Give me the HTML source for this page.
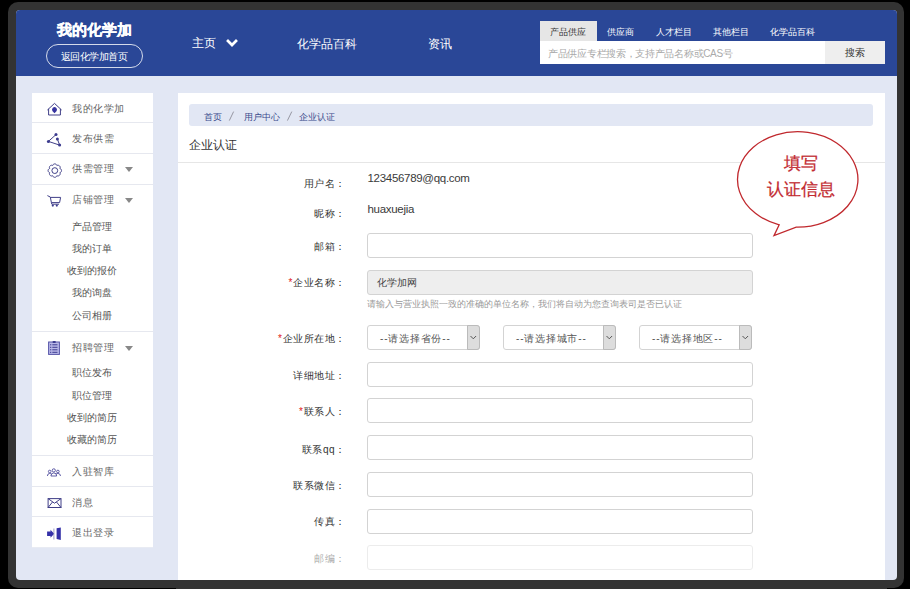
<!DOCTYPE html>
<html><head><meta charset="utf-8">
<style>
*{margin:0;padding:0;box-sizing:border-box}
html,body{width:910px;height:589px;overflow:hidden;background:#000;font-family:"Liberation Sans",sans-serif}
.a{position:absolute;white-space:nowrap}
#frame{position:absolute;left:8px;top:2px;width:896px;height:586px;background:#333;border-radius:10px}
#fb{position:absolute;left:176px;top:570px;width:711px;height:19px;background:#333}
#screen{position:absolute;left:16px;top:10px;width:881px;height:570px;background:#e2e7f4;border-radius:4px;overflow:hidden}
#hdr{position:absolute;left:0;top:0;width:881px;height:66px;background:#2a4797}
.w{color:#fff}
#side{position:absolute;left:16px;top:83px;width:121px;height:455px;background:#fff}
.sep{position:absolute;left:0;width:121px;height:1px;background:#e6e8ef}
.it{position:absolute;left:40px;font-size:10px;letter-spacing:0.6px;color:#666;line-height:14px;white-space:nowrap}
.sub{position:absolute;left:-1px;width:121px;text-align:center;font-size:10px;color:#555;line-height:14px;white-space:nowrap}
.tri{position:absolute;left:93px;width:0;height:0;border-left:4.5px solid transparent;border-right:4.5px solid transparent;border-top:5px solid #888}
#mainbg{position:absolute;left:162px;top:83px;width:707px;height:500px;background:#fff}
#main{position:absolute;left:162px;top:82px;width:707px;height:500px}
.lab{position:absolute;right:539.5px;letter-spacing:0.5px;font-size:10px;color:#333;line-height:14px;text-align:right;white-space:nowrap}
.inp{position:absolute;left:189px;width:386px;height:25px;border:1px solid #d3d3d3;border-radius:3px;background:#fff}
.sel{position:absolute;width:113px;height:25px;border:1px solid #d3d3d3;border-radius:3px;background:#fff}
.sel i{position:absolute;right:-1px;top:-1px;width:13px;height:25px;background:#ddd;border:1px solid #bbb;border-radius:0 3px 3px 0}
.sel span{position:absolute;left:12px;top:6px;font-size:10px;letter-spacing:0.8px;line-height:14px;color:#555;white-space:nowrap}
.req{color:#e02020}
svg.ov{position:absolute;left:0;top:0}
</style></head><body>
<div id="frame"></div><div id="fb"></div>
<div id="screen">
  <div id="hdr">
    <div class="a w" style="left:41px;top:10px;font-size:15px;font-weight:bold;line-height:20px;-webkit-text-stroke:0.35px #fff">我的化学加</div>
    <div class="a" style="left:30px;top:34px;width:97px;height:24px;border:1px solid rgba(255,255,255,.8);border-radius:12px"></div>
    <div class="a w" style="left:44.5px;top:40px;font-size:10px;line-height:13px;letter-spacing:-0.45px">返回化学加首页</div>
    <div class="a w" style="left:176px;top:25.2px;font-size:12px;line-height:16px">主页</div>
    <div class="a w" style="left:281px;top:26px;font-size:12px;line-height:16px">化学品百科</div>
    <div class="a w" style="left:412px;top:26px;font-size:12px;line-height:16px">资讯</div>
    <!-- tabs -->
    <div class="a" style="left:524px;top:11px;width:57px;height:20px;background:#e6e6e6"></div>
    <div class="a" style="left:534px;top:15.5px;font-size:9px;line-height:13px;color:#333">产品供应</div>
    <div class="a w" style="left:591px;top:15.5px;font-size:9px;line-height:13px">供应商</div>
    <div class="a w" style="left:640px;top:15.5px;font-size:9px;line-height:13px">人才栏目</div>
    <div class="a w" style="left:696.5px;top:15.5px;font-size:9px;line-height:13px">其他栏目</div>
    <div class="a w" style="left:753.5px;top:15.5px;font-size:9px;line-height:13px">化学品百科</div>
    <div class="a" style="left:524px;top:31px;width:285px;height:23px;background:#fff"></div>
    <div class="a" style="left:532px;top:36.5px;font-size:10px;line-height:13px;color:#aaa;letter-spacing:-0.3px">产品供应专栏搜索，支持产品名称或CAS号</div>
    <div class="a" style="left:809px;top:31px;width:60px;height:23px;background:#eee"></div>
    <div class="a" style="left:829px;top:36px;font-size:10px;line-height:13px;color:#333">搜索</div>
  </div>

  <div id="side">
    <div class="it" style="top:9px">我的化学加</div>
    <div class="sep" style="top:29px"></div>
    <div class="it" style="top:39px">发布供需</div>
    <div class="sep" style="top:60px"></div>
    <div class="it" style="top:69px">供需管理</div><div class="tri" style="top:74px"></div>
    <div class="sep" style="top:91px"></div>
    <div class="it" style="top:100px">店铺管理</div><div class="tri" style="top:105px"></div>
    <div class="sub" style="top:127px">产品管理</div>
    <div class="sub" style="top:149px">我的订单</div>
    <div class="sub" style="top:171px">收到的报价</div>
    <div class="sub" style="top:193px">我的询盘</div>
    <div class="sub" style="top:216px">公司相册</div>
    <div class="sep" style="top:238px"></div>
    <div class="it" style="top:248px">招聘管理</div><div class="tri" style="top:253px"></div>
    <div class="sub" style="top:273px">职位发布</div>
    <div class="sub" style="top:296px">职位管理</div>
    <div class="sub" style="top:318px">收到的简历</div>
    <div class="sub" style="top:340px">收藏的简历</div>
    <div class="sep" style="top:362px"></div>
    <div class="it" style="top:372px">入驻智库</div>
    <div class="sep" style="top:393px"></div>
    <div class="it" style="top:403px">消息</div>
    <div class="sep" style="top:423px"></div>
    <div class="it" style="top:433px">退出登录</div>
    <div class="sep" style="top:454px;background:#e8ebf3"></div>
  </div>

  <div id="mainbg"></div>
  <div id="main">
    <div class="a" style="left:11px;top:12px;width:684px;height:22px;background:#e2e7f4;border-radius:3px"></div>
    <div class="a" style="left:25.5px;top:18.5px;font-size:9px;line-height:13px;color:#3a4b8c">首页</div>
    <div class="a" style="left:65.5px;top:18.5px;font-size:9px;line-height:13px;color:#3a4b8c">用户中心</div>
    <div class="a" style="left:120.5px;top:18.5px;font-size:9px;line-height:13px;color:#3a4b8c">企业认证</div>
    <div class="a" style="left:10.5px;top:45px;font-size:12px;line-height:16px;color:#333">企业认证</div>
    <div class="a" style="left:0;top:70px;width:707px;height:1px;background:#e6e6e6"></div>

    <div class="lab" style="top:85px">用户名：</div>
    <div class="a" style="left:189.5px;top:79px;font-size:11.5px;letter-spacing:-0.3px;line-height:15px;color:#3a3a3a">123456789@qq.com</div>
    <div class="lab" style="top:115px">昵称：</div>
    <div class="a" style="left:189.5px;top:110px;font-size:11.5px;letter-spacing:-0.3px;line-height:15px;color:#3a3a3a">huaxuejia</div>
    <div class="lab" style="top:148px">邮箱：</div>
    <div class="inp" style="top:141px"></div>
    <div class="lab" style="top:184px"><span class="req">*</span>企业名称：</div>
    <div class="inp" style="top:178px;background:#eee"></div>
    <div class="a" style="left:199px;top:184px;font-size:10px;line-height:14px;color:#444">化学加网</div>
    <div class="a" style="left:189px;top:206px;font-size:8.6px;line-height:12px;color:#999">请输入与营业执照一致的准确的单位名称，我们将自动为您查询表司是否已认证</div>

    <div class="lab" style="top:240px"><span class="req">*</span>企业所在地：</div>
    <div class="sel" style="left:189px;top:233px"><span>--请选择省份--</span><i></i></div>
    <div class="sel" style="left:325px;top:233px"><span>--请选择城市--</span><i></i></div>
    <div class="sel" style="left:461px;top:233px"><span>--请选择地区--</span><i></i></div>

    <div class="lab" style="top:277px">详细地址：</div>
    <div class="inp" style="top:270px"></div>
    <div class="lab" style="top:313px"><span class="req">*</span>联系人：</div>
    <div class="inp" style="top:306px"></div>
    <div class="lab" style="top:351px">联系qq：</div>
    <div class="inp" style="top:343px"></div>
    <div class="lab" style="top:387px">联系微信：</div>
    <div class="inp" style="top:380px"></div>
    <div class="lab" style="top:423px">传真：</div>
    <div class="inp" style="top:417px"></div>
    <div style="opacity:.42">
    <div class="lab" style="top:460px">邮编：</div>
    <div class="inp" style="top:453px"></div>
    </div>
  </div>
</div>
<svg class="ov" width="910" height="589" viewBox="0 0 910 589">
  <!-- header chevron -->
  <path d="M228 41 L232 45 L236 41" stroke="#fff" stroke-width="2.7" fill="none" stroke-linecap="square"/>
  <g stroke="#403f88" fill="none" stroke-width="1">
    <!-- home -->
    <path d="M47.4 110 L54.5 103.4 L61.6 110 M48.6 108.9 V115 H60.4 V108.9"/>
    <!-- share -->
    <path d="M56 134.6 L48.4 141.4 L59.6 145.1 L57.4 139"/>
    <!-- gear -->
    <circle cx="54.8" cy="170.6" r="2.9"/>
    <path d="M61.5 170.6 L61.5 171.0 L61.3 171.5 L61.1 171.9 L60.8 172.2 L60.4 172.5 L59.9 172.7 L60.1 173.2 L60.2 173.7 L60.1 174.2 L60.0 174.6 L59.8 175.0 L59.5 175.3 L59.2 175.6 L58.8 175.8 L58.4 175.9 L57.9 176.0 L57.4 175.9 L56.9 175.7 L56.7 176.2 L56.4 176.6 L56.1 176.9 L55.7 177.1 L55.2 177.3 L54.8 177.3 L54.4 177.3 L53.9 177.1 L53.5 176.9 L53.2 176.6 L52.9 176.2 L52.7 175.7 L52.2 175.9 L51.7 176.0 L51.2 175.9 L50.8 175.8 L50.4 175.6 L50.1 175.3 L49.8 175.0 L49.6 174.6 L49.5 174.2 L49.4 173.7 L49.5 173.2 L49.7 172.7 L49.2 172.5 L48.8 172.2 L48.5 171.9 L48.3 171.5 L48.1 171.0 L48.1 170.6 L48.1 170.2 L48.3 169.7 L48.5 169.3 L48.8 169.0 L49.2 168.7 L49.7 168.5 L49.5 168.0 L49.4 167.5 L49.5 167.0 L49.6 166.6 L49.8 166.2 L50.1 165.9 L50.4 165.6 L50.8 165.4 L51.2 165.3 L51.7 165.2 L52.2 165.3 L52.7 165.5 L52.9 165.0 L53.2 164.6 L53.5 164.3 L53.9 164.1 L54.4 163.9 L54.8 163.9 L55.2 163.9 L55.7 164.1 L56.1 164.3 L56.4 164.6 L56.7 165.0 L56.9 165.5 L57.4 165.3 L57.9 165.2 L58.4 165.3 L58.8 165.4 L59.2 165.6 L59.5 165.9 L59.8 166.2 L60.0 166.6 L60.1 167.0 L60.2 167.5 L60.1 168.0 L59.9 168.5 L60.4 168.7 L60.8 169.0 L61.1 169.3 L61.3 169.7 L61.5 170.2Z"/>
    <!-- cart -->
    <path d="M47.4 195.6 L50.3 197 L51.4 202.6 H59.6 L60.6 197.4 H50.6 M51.4 202.6 L51.8 204.2 H59"/>
    <!-- mail -->
    <rect x="48.1" y="498.6" width="12.9" height="8.9"/>
    <path d="M48.1 498.6 L54.5 503.2 L61 498.6 M48.1 507.5 L52.5 502 M61 507.5 L56.5 502"/>
    <!-- people -->
    <g stroke="#4e4c9c" stroke-width="0.9">
    <circle cx="53.8" cy="470.4" r="1.6"/>
    <circle cx="49.7" cy="471.5" r="1.3"/>
    <circle cx="57.9" cy="471.5" r="1.3"/>
    <path d="M50.9 476 Q51 472.9 53.8 472.9 Q56.6 472.9 56.7 476 Z M47.4 476 Q47.5 473.5 49.7 473.4 Q50.9 473.4 51.6 474.2 M60.5 476 Q60.4 473.5 57.9 473.4 Q56.7 473.4 56 474.2"/>
    </g>
  </g>
  <g fill="#3c3b8f">
    <path d="M54.5 113.2 L52.4 110.9 A2.45 2.45 0 1 1 56.6 110.9 Z" fill="#3733a0"/>
    <circle cx="56" cy="134.6" r="1.5"/><circle cx="48.4" cy="141.4" r="1.5"/><circle cx="57.4" cy="139" r="1.5"/><circle cx="59.6" cy="145.1" r="1.5"/>
    <circle cx="52.8" cy="205.6" r="1.1"/><circle cx="56.8" cy="205.6" r="1.1"/>
  </g>
  <!-- clipboard -->
  <rect x="48.6" y="342" width="10.8" height="12.4" fill="#b9b8e8" stroke="#5654a8" stroke-width="1"/>
  <rect x="52.5" y="341" width="3.4" height="2" rx="1" fill="#3c3b8f"/>
  <g stroke="#3c3b8f" stroke-width="1">
    <path d="M50 344.8 H51.3 M52.3 344.8 H57.5 M50 347.3 H51.3 M52.3 347.3 H57.5 M50 349.8 H51.3 M52.3 349.8 H57.5 M50 352.3 H51.3 M52.3 352.3 H57.5"/>
  </g>
  <!-- exit -->
  <path d="M47.1 531.6 H50.5 V529.8 L54.2 533.8 L50.5 537.8 V536 H47.1 Z" fill="#3430a8"/>
  <path d="M53.9 528.5 V539.5" stroke="#8886bb" stroke-width="0.8"/>
  <path d="M56.6 528.3 L60.8 527.4 V540 L56.6 539 Z" fill="#3430a8"/>
  <path d="M470.5 336 L473.3 338.8 L476.1 336 M606.5 336 L609.3 338.8 L612.1 336 M742.5 336 L745.3 338.8 L748.1 336" stroke="#555" stroke-width="1" fill="none"/>
  <path d="M229.3 120.6 L233.6 111.6 M287.4 120.6 L291.8 111.6" stroke="#8d8d99" stroke-width="0.9" fill="none"/>
  <!-- speech bubble -->
  <path d="M779.2 224.8 L774 235.6 L796.2 227.1 A60.2 47.7 0 1 0 779.2 224.8 Z" fill="#fff" stroke="#c0282d" stroke-width="1.3" stroke-linejoin="miter"/>
  <text x="801" y="169" font-size="17" fill="#c22a30" stroke="#c22a30" stroke-width="0.25" text-anchor="middle" font-family="Liberation Sans, sans-serif">填写</text>
  <text x="801" y="195" font-size="17" fill="#c22a30" stroke="#c22a30" stroke-width="0.25" text-anchor="middle" font-family="Liberation Sans, sans-serif">认证信息</text>
</svg>
</body></html>
